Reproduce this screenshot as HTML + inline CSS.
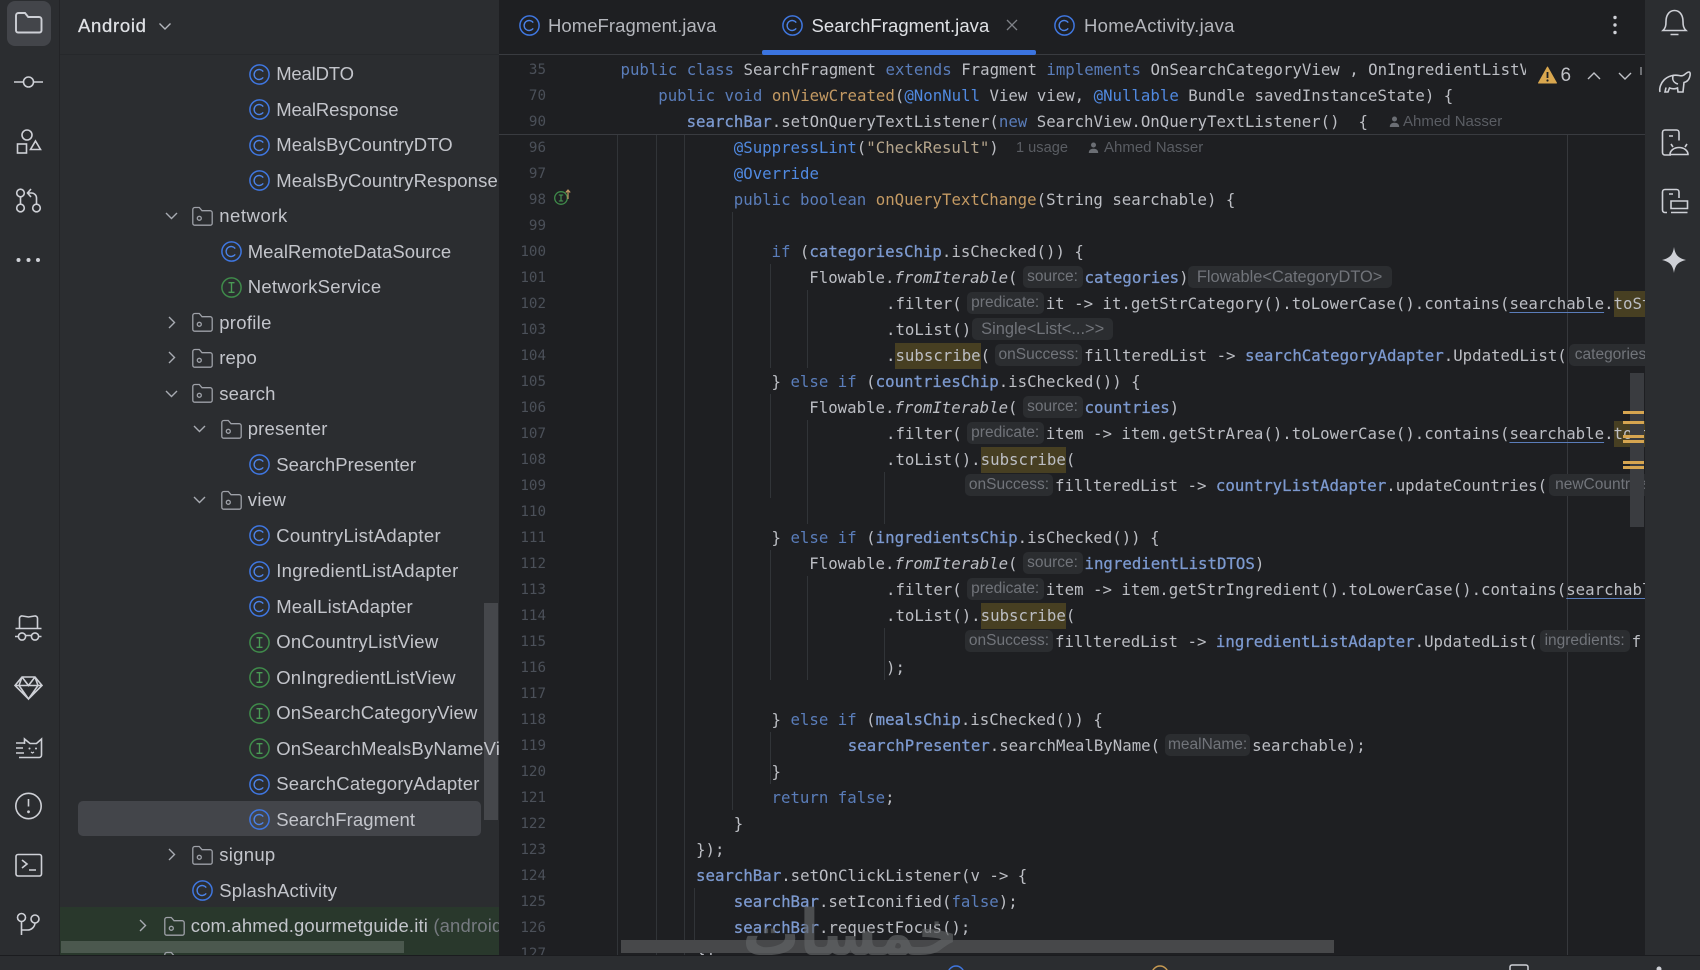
<!DOCTYPE html>
<html><head><meta charset="utf-8"><style>
html,body{margin:0;padding:0;background:#1e1f22;width:1700px;height:970px;overflow:hidden}
#root{position:absolute;left:0;top:0;width:1700px;height:970px;overflow:hidden;background:#1e1f22;font-family:"Liberation Sans",sans-serif}
.abs{position:absolute}
.r{position:absolute;height:26px;line-height:26px;font-size:18.5px;color:#c3c5cb;white-space:nowrap}
.r svg{position:absolute;top:2.5px;left:-27.2px;width:21px;height:21px;overflow:visible}
.r svg.ch{left:-55.6px;top:5px;width:15px;height:15px}
.l{position:absolute;height:26px;line-height:26px;font-family:"DejaVu Sans Mono","Liberation Mono",monospace;font-size:15.72px;color:#bcbec4;white-space:pre}
.n{position:absolute;left:500px;width:46px;margin-top:1px;text-align:right;height:26px;line-height:26px;font-family:"DejaVu Sans Mono","Liberation Mono",monospace;font-size:14.2px;color:#4b5059}
.k{color:#5a7dba}.f{color:#7c99cf;-webkit-text-stroke:.3px #7c99cf}.m{color:#c49a63}.a{color:#5089e0}.s{color:#b5a58c}
.it{font-style:italic}.u{text-decoration:underline;text-decoration-color:#5a7dba;text-underline-offset:3px}
.hl{background:#473f22;display:inline-block;height:26px;vertical-align:top}
.h{display:inline-block;height:22px;line-height:22px;vertical-align:top;margin:1px 2px 0 5px;background:#2b2d30;border-radius:5px;font-family:"Liberation Sans",sans-serif;font-size:15.5px;color:#71747a;text-align:center;overflow:hidden}
.h.b{font-size:16.4px}
.h.cl{text-align:left;text-indent:6px;border-radius:5px 0 0 5px}
.au{position:absolute;font-size:15px;color:#5a5d63;height:26px;line-height:26px;white-space:nowrap}
.gd{position:absolute;width:1px;background:#313438}
.t{position:absolute;top:13px;height:26px;line-height:26px;font-size:18.5px;white-space:nowrap}
</style></head><body><div id="root">

<svg width="0" height="0" style="position:absolute"><defs>
<symbol id="c" viewBox="0 0 21 21"><circle cx="10.5" cy="10.5" r="9.6" fill="none" stroke="#3f76df" stroke-width="1.5"/><path d="M14.2 7.6a5 5 0 1 0 0 5.8" fill="none" stroke="#4b82e6" stroke-width="1.4"/></symbol>
<symbol id="i" viewBox="0 0 21 21"><circle cx="10.5" cy="10.5" r="9.6" fill="none" stroke="#3f8a4a" stroke-width="1.5"/><path d="M7.5 5.7h6M7.5 15.3h6M10.5 5.7v9.6" fill="none" stroke="#4a9a55" stroke-width="1.4"/></symbol>
<symbol id="d" viewBox="0 0 21 21"><path d="M.8 3.5a2 2 0 0 1 2-2h4.5l2.7 3.2h8.2a2 2 0 0 1 2 2v10.5a2 2 0 0 1-2 2H2.8a2 2 0 0 1-2-2z" fill="none" stroke="#9ea1a8" stroke-width="1.3"/><circle cx="7.3" cy="12.3" r="2" fill="none" stroke="#9ea1a8" stroke-width="1.3"/></symbol>
<symbol id="dn" viewBox="0 0 15 15"><path d="M2 5l5.5 5.5L13 5" fill="none" stroke="#a8abb2" stroke-width="1.4"/></symbol>
<symbol id="rt" viewBox="0 0 15 15"><path d="M5 2l5.5 5.5L5 13" fill="none" stroke="#a8abb2" stroke-width="1.4"/></symbol>
</defs></svg>

<!-- left strip + panel -->
<div class="abs" style="left:0;top:0;width:499px;height:955px;background:#2b2d30"></div>
<div class="abs" style="left:59px;top:0;width:1px;height:955px;background:#232427"></div>
<div class="abs" style="left:60px;top:54px;width:439px;height:1px;background:#26282b"></div>
<div class="abs" style="left:7px;top:1px;width:44px;height:45px;border-radius:8px;background:#43454a"></div>

<svg class="abs" style="left:0;top:0" width="60" height="955" fill="none" stroke="#ced0d6" stroke-width="1.6">
<path d="M16 15.5a2.5 2.5 0 0 1 2.5-2.5h6.5l3.2 4h10.8a2.5 2.5 0 0 1 2.5 2.5v11a2 2 0 0 1-2 2H18a2 2 0 0 1-2-2z" stroke-width="1.9"/>
<path d="M14 82h9M33 82h10"/><circle cx="28.500" cy="82" r="5"/>
<circle cx="27" cy="135" r="5"/><rect x="17.500" y="144" width="9" height="9"/><path d="M35.500 141l5 8.500H30.500z"/>
<circle cx="20.500" cy="193" r="3.800"/><circle cx="20.500" cy="208" r="3.800"/><circle cx="36.500" cy="208" r="3.800"/><path d="M20.500 197v7M36.500 204v-6a5 5 0 0 0-5-5h-3M31 189l-3.500 4 3.500 4"/>
<g fill="#ced0d6" stroke="none"><circle cx="18.500" cy="260" r="2"/><circle cx="28.500" cy="260" r="2"/><circle cx="38" cy="260" r="2"/></g>
<path d="M19.500 628v-10a2.500 2.500 0 0 1 3-2l6 1 6-1a2.500 2.500 0 0 1 3 2v10M15.500 628.500h26M15 636.500h3.500M38.500 636.500h3M25.500 635.500h6"/><circle cx="22" cy="636.500" r="3.600"/><circle cx="35" cy="636.500" r="3.600"/>
<path d="M15 685.500l7-8.500h13l7 8.500-13.500 13.500zM15 685.500h27M22 677l-3 8.500 9.500 13.500 9.500-13.500-3-8.500M22 677l6.500 8.500L35 677" stroke-width="1.600"/>
<path d="M16 743h8M16 748h7M16 753h8M19 757.500h6M24.500 744v-5l5.500 4.500h6.500l5-4.500v16a2.500 2.500 0 0 1-2.500 2.500H25"/><path d="M31 752l1.500 1 1.500-1" stroke-width="1.300"/><circle cx="29.500" cy="748.500" r="1" fill="#ced0d6" stroke="none"/><circle cx="36" cy="748.500" r="1" fill="#ced0d6" stroke="none"/>
<circle cx="28.500" cy="806" r="12.700"/><path d="M28.500 799v7.500"/><circle cx="28.500" cy="811.800" r="1.400" fill="#ced0d6" stroke="none"/>
<rect x="16" y="854.500" width="25.500" height="21.500" rx="2"/><path d="M22 860l5 4-5 4M29 870h7"/>
<circle cx="21.500" cy="917.500" r="4"/><circle cx="35" cy="919" r="4"/><path d="M21.500 921.500v13.500M21.500 930h6a7.500 7.500 0 0 0 7.500-7"/>
</svg>

<div class="abs" style="left:78px;top:12px;height:26px;line-height:27px;font-size:18.5px;letter-spacing:.7px;color:#dfe1e5;-webkit-text-stroke:.25px #dfe1e5">Android</div>
<svg class="abs" style="left:158px;top:19px" width="14" height="14" viewBox="0 0 14 14" fill="none" stroke="#b4b7bd" stroke-width="1.4"><path d="M1.500 4.500L7 10l5.500-5.500"/></svg>

<!-- panel rows -->
<div class="abs" style="left:60px;top:907px;width:439px;height:48px;background:#29382c"></div>
<div class="abs" style="left:61px;top:941px;width:343px;height:12px;background:#4b584e"></div>
<div class="abs" style="left:77.500px;top:801px;width:403px;height:35px;border-radius:5px;background:#43454a"></div>
<div class="abs" style="left:484px;top:603px;width:14px;height:217px;background:#45474b"></div>

<div class="abs" style="left:60px;top:55px;width:439px;height:900px;overflow:hidden">
<div style="position:absolute;left:-60px;top:-55px;width:499px;height:1010px">
<div class="r" style="left:276.200px;top:61px;letter-spacing:-.17px"><svg><use href="#c"/></svg>MealDTO</div>
<div class="r" style="left:276.200px;top:96.500px;letter-spacing:-.1px"><svg><use href="#c"/></svg>MealResponse</div>
<div class="r" style="left:276.200px;top:132px;letter-spacing:.13px"><svg><use href="#c"/></svg>MealsByCountryDTO</div>
<div class="r" style="left:276.200px;top:167.500px;letter-spacing:.12px"><svg><use href="#c"/></svg>MealsByCountryResponse</div>
<div class="r" style="left:219.200px;top:203px;letter-spacing:.55px"><svg class="ch"><use href="#dn"/></svg><svg><use href="#d"/></svg>network</div>
<div class="r" style="left:247.700px;top:238.500px;letter-spacing:.05px"><svg><use href="#c"/></svg>MealRemoteDataSource</div>
<div class="r" style="left:247.700px;top:274px;letter-spacing:.3px"><svg><use href="#i"/></svg>NetworkService</div>
<div class="r" style="left:219.200px;top:309.500px;letter-spacing:.3px"><svg class="ch"><use href="#rt"/></svg><svg><use href="#d"/></svg>profile</div>
<div class="r" style="left:219.200px;top:345px;letter-spacing:.2px"><svg class="ch"><use href="#rt"/></svg><svg><use href="#d"/></svg>repo</div>
<div class="r" style="left:219.200px;top:380.500px;letter-spacing:.15px"><svg class="ch"><use href="#dn"/></svg><svg><use href="#d"/></svg>search</div>
<div class="r" style="left:247.700px;top:416px;letter-spacing:.2px"><svg class="ch"><use href="#dn"/></svg><svg><use href="#d"/></svg>presenter</div>
<div class="r" style="left:276.200px;top:451.500px;letter-spacing:.07px"><svg><use href="#c"/></svg>SearchPresenter</div>
<div class="r" style="left:247.700px;top:487px;letter-spacing:.4px"><svg class="ch"><use href="#dn"/></svg><svg><use href="#d"/></svg>view</div>
<div class="r" style="left:276.200px;top:522.500px;letter-spacing:.36px"><svg><use href="#c"/></svg>CountryListAdapter</div>
<div class="r" style="left:276.200px;top:558px;letter-spacing:.31px"><svg><use href="#c"/></svg>IngredientListAdapter</div>
<div class="r" style="left:276.200px;top:593.500px;letter-spacing:.2px"><svg><use href="#c"/></svg>MealListAdapter</div>
<div class="r" style="left:276.200px;top:629px;letter-spacing:.25px"><svg><use href="#i"/></svg>OnCountryListView</div>
<div class="r" style="left:276.200px;top:664.500px;letter-spacing:.2px"><svg><use href="#i"/></svg>OnIngredientListView</div>
<div class="r" style="left:276.200px;top:700px;letter-spacing:.16px"><svg><use href="#i"/></svg>OnSearchCategoryView</div>
<div class="r" style="left:276.200px;top:735.500px;letter-spacing:.2px"><svg><use href="#i"/></svg>OnSearchMealsByNameView</div>
<div class="r" style="left:276.200px;top:771px;letter-spacing:.24px"><svg><use href="#c"/></svg>SearchCategoryAdapter</div>
<div class="r" style="left:276.200px;top:806.500px;letter-spacing:.08px"><svg><use href="#c"/></svg>SearchFragment</div>
<div class="r" style="left:219.200px;top:842px;letter-spacing:.3px"><svg class="ch"><use href="#rt"/></svg><svg><use href="#d"/></svg>signup</div>
<div class="r" style="left:219.200px;top:877.500px;letter-spacing:.2px"><svg><use href="#c"/></svg>SplashActivity</div>
<div class="r" style="left:190.700px;top:913px;letter-spacing:.15px"><svg class="ch"><use href="#rt"/></svg><svg><use href="#d"/></svg>com.ahmed.gourmetguide.iti <span style="color:#767a80">(androidTest)</span></div>
<div class="r" style="left:190.700px;top:948.500px"><svg><use href="#d"/></svg></div>
</div></div>

<!-- tabs -->
<div class="abs" style="left:499px;top:54px;width:1146px;height:1px;background:#393b40"></div>
<svg class="abs" style="left:519px;top:15px" width="21" height="21"><use href="#c"/></svg>
<div class="t" style="left:548px;color:#b4b6bc;letter-spacing:.05px">HomeFragment.java</div>
<svg class="abs" style="left:782px;top:15px" width="21" height="21"><use href="#c"/></svg>
<div class="t" style="left:811.500px;color:#dfe1e5;letter-spacing:.05px">SearchFragment.java</div>
<svg class="abs" style="left:1006px;top:19px" width="12" height="12" fill="none" stroke="#7f8288" stroke-width="1.3"><path d="M1 1l10 10M11 1L1 11"/></svg>
<svg class="abs" style="left:1054px;top:15px" width="21" height="21"><use href="#c"/></svg>
<div class="t" style="left:1084px;color:#b4b6bc;letter-spacing:.3px">HomeActivity.java</div>
<div class="abs" style="left:762px;top:50px;width:274px;height:5px;border-radius:2px;background:#3b74e0"></div>
<svg class="abs" style="left:1611px;top:15px" width="8" height="20" fill="#ced0d6"><circle cx="4" cy="2.500" r="1.700"/><circle cx="4" cy="10" r="1.700"/><circle cx="4" cy="17.500" r="1.700"/></svg>

<!-- editor guides -->
<div class="gd" style="left:617px;top:134px;height:821px"></div>
<div class="gd" style="left:656px;top:134px;height:821px"></div>
<div class="gd" style="left:684px;top:134px;height:821px"></div>
<div class="gd" style="left:732px;top:212px;height:598px"></div>
<div class="gd" style="left:770px;top:264px;height:104px"></div>
<div class="gd" style="left:807px;top:290px;height:78px"></div>
<div class="gd" style="left:770px;top:394px;height:104px"></div>
<div class="gd" style="left:807px;top:420px;height:104px"></div>
<div class="gd" style="left:884px;top:472px;height:52px"></div>
<div class="gd" style="left:770px;top:550px;height:130px"></div>
<div class="gd" style="left:807px;top:576px;height:104px"></div>
<div class="gd" style="left:884px;top:628px;height:52px"></div>
<div class="gd" style="left:770px;top:732px;height:52px"></div>
<div class="gd" style="left:694px;top:888px;height:58px"></div>
<div class="gd" style="left:1567px;top:134px;height:821px;background:#36383c"></div>

<!-- line numbers -->
<div class="n" style="top:56px">35</div><div class="n" style="top:82px">70</div><div class="n" style="top:108px">90</div>
<div class="n" style="top:134px">96</div><div class="n" style="top:160px">97</div><div class="n" style="top:186px">98</div><div class="n" style="top:212px">99</div>
<div class="n" style="top:238px">100</div><div class="n" style="top:264px">101</div><div class="n" style="top:290px">102</div><div class="n" style="top:316px">103</div><div class="n" style="top:342px">104</div><div class="n" style="top:368px">105</div><div class="n" style="top:394px">106</div><div class="n" style="top:420px">107</div><div class="n" style="top:446px">108</div><div class="n" style="top:472px">109</div><div class="n" style="top:498px">110</div><div class="n" style="top:524px">111</div><div class="n" style="top:550px">112</div><div class="n" style="top:576px">113</div><div class="n" style="top:602px">114</div><div class="n" style="top:628px">115</div><div class="n" style="top:654px">116</div><div class="n" style="top:680px">117</div><div class="n" style="top:706px">118</div><div class="n" style="top:732px">119</div><div class="n" style="top:758px">120</div><div class="n" style="top:784px">121</div><div class="n" style="top:810px">122</div><div class="n" style="top:836px">123</div><div class="n" style="top:862px">124</div><div class="n" style="top:888px">125</div><div class="n" style="top:914px">126</div><div class="n" style="top:940px;height:14px;overflow:hidden">127</div>

<svg class="abs" style="left:553px;top:188px" width="20" height="20" fill="none"><circle cx="8" cy="10" r="6.300" stroke="#3f8a4a" stroke-width="1.300"/><path d="M5.800 7h4.400M5.800 13h4.400M8 7v6" stroke="#4a9a55" stroke-width="1.100"/><path d="M15 11V2M12.800 4.500L15 2l2.200 2.500" stroke="#c49a63" stroke-width="1.200"/></svg>

<!-- code -->
<div class="abs" style="left:1px;top:1px;width:1644px;height:954px;overflow:hidden">
<div class="abs" style="left:619.500px;top:56px;width:905px;height:26px;overflow:hidden"><div class="l" style="left:0;top:0"><span class="k">public class</span> SearchFragment <span class="k">extends</span> Fragment <span class="k">implements</span> OnSearchCategoryView , OnIngredientListView</div></div>
<div class="l" style="left:657.260px;top:82px"><span class="k">public void</span> <span class="m">onViewCreated</span>(<span class="a">@NonNull</span> View view, <span class="a">@Nullable</span> Bundle savedInstanceState) {</div>
<div class="l" style="left:685.580px;top:108px"><span class="f">searchBar</span>.setOnQueryTextListener(<span class="k">new</span> SearchView.OnQueryTextListener()  {</div>
<div class="au" style="left:1402px;top:108px">Ahmed Nasser</div>
<svg class="abs" style="left:1388px;top:115px" width="11" height="12" fill="#6b6e74"><circle cx="5.500" cy="3" r="2.500"/><path d="M.8 11c0-3 2-4.200 4.700-4.200S10.200 8 10.200 11z"/></svg>
<div class="abs" style="left:498px;top:133px;width:1146px;height:1px;background:#393b40"></div>

<div class="l" style="left:732.780px;top:134px"><span class="a">@SuppressLint</span>(<span class="s">"CheckResult"</span>)</div>
<div class="au" style="left:1015px;top:134px;font-size:14.600px">1 usage</div>
<svg class="abs" style="left:1087px;top:141px" width="11" height="12" fill="#6b6e74"><circle cx="5.500" cy="3" r="2.500"/><path d="M.8 11c0-3 2-4.200 4.700-4.200S10.200 8 10.200 11z"/></svg>
<div class="au" style="left:1103px;top:134px">Ahmed Nasser</div>
<div class="l" style="left:732.780px;top:160px"><span class="a">@Override</span></div>
<div class="l" style="left:732.780px;top:186px"><span class="k">public boolean</span> <span class="m">onQueryTextChange</span>(String searchable) {</div>

<div class="l" style="left:770.540px;top:238px"><span class="k">if</span> (<span class="f">categoriesChip</span>.isChecked()) {</div>
<div class="l" style="left:808.300px;top:264px">Flowable.<span class="it">fromIterable</span>(<span class="h" style="width:60px">source:</span><span class="f">categories</span>)<span class="h b" style="width:204px;margin-left:-1px">Flowable&lt;CategoryDTO&gt;</span></div>
<div class="l" style="left:885px;top:290px">.filter(<span class="h" style="width:77px">predicate:</span>it -&gt; it.getStrCategory().toLowerCase().contains(<span class="u">searchable</span>.<span class="hl">toString</span></div>
<div class="l" style="left:885px;top:316px">.toList()<span class="h b" style="width:141px;margin-left:1px">Single&lt;List&lt;...&gt;&gt;</span></div>
<div class="l" style="left:885px;top:342px">.<span class="hl">subscribe</span>(<span class="h" style="width:87px">onSuccess:</span>fillteredList -&gt; <span class="f">searchCategoryAdapter</span>.UpdatedList(<span class="h cl" style="width:100px;margin-left:2px">categories:</span></div>
<div class="l" style="left:770.540px;top:368px">} <span class="k">else if</span> (<span class="f">countriesChip</span>.isChecked()) {</div>
<div class="l" style="left:808.300px;top:394px">Flowable.<span class="it">fromIterable</span>(<span class="h" style="width:60px">source:</span><span class="f">countries</span>)</div>
<div class="l" style="left:885px;top:420px">.filter(<span class="h" style="width:77px">predicate:</span>item -&gt; item.getStrArea().toLowerCase().contains(<span class="u">searchable</span>.<span class="hl">toString</span></div>
<div class="l" style="left:885px;top:446px">.toList().<span class="hl">subscribe</span>(</div>
<div class="l" style="left:959px;top:472px"><span class="h" style="width:88px">onSuccess:</span>fillteredList -&gt; <span class="f">countryListAdapter</span>.updateCountries(<span class="h cl" style="width:110px;margin-left:2px">newCountries:</span></div>
<div class="l" style="left:770.540px;top:524px">} <span class="k">else if</span> (<span class="f">ingredientsChip</span>.isChecked()) {</div>
<div class="l" style="left:808.300px;top:550px">Flowable.<span class="it">fromIterable</span>(<span class="h" style="width:60px">source:</span><span class="f">ingredientListDTOS</span>)</div>
<div class="l" style="left:885px;top:576px">.filter(<span class="h" style="width:77px">predicate:</span>item -&gt; item.getStrIngredient().toLowerCase().contains(<span class="u">searchable</span></div>
<div class="l" style="left:885px;top:602px">.toList().<span class="hl">subscribe</span>(</div>
<div class="l" style="left:959px;top:628px"><span class="h" style="width:88px">onSuccess:</span>fillteredList -&gt; <span class="f">ingredientListAdapter</span>.UpdatedList(<span class="h" style="width:90px;margin-left:2px">ingredients:</span>f</div>
<div class="l" style="left:885px;top:654px">);</div>
<div class="l" style="left:770.540px;top:706px">} <span class="k">else if</span> (<span class="f">mealsChip</span>.isChecked()) {</div>
<div class="l" style="left:846.800px;top:732px"><span class="f">searchPresenter</span>.searchMealByName(<span class="h" style="width:85px">mealName:</span>searchable);</div>
<div class="l" style="left:770.540px;top:758px">}</div>
<div class="l" style="left:770.540px;top:784px"><span class="k">return false</span>;</div>
<div class="l" style="left:732.780px;top:810px">}</div>
<div class="l" style="left:695.020px;top:836px">});</div>
<div class="l" style="left:695.020px;top:862px"><span class="f">searchBar</span>.setOnClickListener(v -&gt; {</div>
<div class="l" style="left:732.780px;top:888px"><span class="f">searchBar</span>.setIconified(<span class="k">false</span>);</div>
<div class="l" style="left:732.780px;top:914px"><span class="f">searchBar</span>.requestFocus();</div>
<div class="l" style="left:695.020px;top:940px">});</div>
</div>

<!-- inspections -->
<svg class="abs" style="left:1538px;top:66px" width="19" height="18"><path d="M9.500 1L18.500 17H.5z" fill="#d9a74f" stroke="#d9a74f" stroke-linejoin="round" stroke-width="1"/><path d="M9.500 6v6" stroke="#1e1f22" stroke-width="1.800"/><circle cx="9.500" cy="14.500" r="1.100" fill="#1e1f22"/></svg>
<div class="abs" style="left:1560.500px;top:63px;font-size:19px;line-height:26px;color:#bfc1c7">6</div>
<svg class="abs" style="left:1587px;top:71px" width="45" height="10" fill="none" stroke="#c0c2c8" stroke-width="1.400"><path d="M1 8l6-6 6 6M32 2l6 6 6-6"/></svg>
<div class="abs" style="left:1640px;top:67px;width:1.500px;height:8px;background:#6e7074"></div>

<!-- right scroll -->
<div class="abs" style="left:1630px;top:373px;width:14px;height:154px;background:#3a3c40"></div>
<div class="abs" style="left:1623px;top:411px;width:21px;height:3px;background:#d6a550"></div>
<div class="abs" style="left:1623px;top:421px;width:21px;height:3px;background:#d6a550"></div>
<div class="abs" style="left:1623px;top:435px;width:21px;height:3px;background:#d6a550"></div>
<div class="abs" style="left:1623px;top:440px;width:21px;height:3px;background:#d6a550"></div>
<div class="abs" style="left:1623px;top:461px;width:21px;height:3px;background:#d6a550"></div>
<div class="abs" style="left:1623px;top:466px;width:21px;height:3px;background:#d6a550"></div>

<!-- right strip -->
<div class="abs" style="left:1645px;top:0;width:55px;height:955px;background:#2b2d30"></div>
<svg class="abs" style="left:1645px;top:0" width="55" height="290" fill="none" stroke="#ced0d6" stroke-width="1.600">
<path d="M18 30.500c2.500-2.500 3-5 3-9 0-6 3-11 8.500-11s8.500 5 8.500 11c0 4 .5 6.500 3 9zM25.500 34.500h8"/>
<path d="M15 92c-1-4 1-9 4-12 4-4 10-5.500 15-4.500 2 .5 3.500.5 5-.5s3-3 5-3c1.500 0 1.500 3 .5 5.500-1 3-3.500 4.500-5.500 5l-1 9.500h-5l-.5-4c-2 1-5 1-8 0l-1.500 4H20l1-4.500M28 76c-1 4 1 7 5 8"/>
<path d="M26 155h-6a2.500 2.500 0 0 1-2.500-2.500v-20a2.500 2.500 0 0 1 2.500-2.500h11.500a2.500 2.500 0 0 1 2.500 2.500v8M24 136h4M25 154.500a9 7 0 0 1 18 0zM28 147l-2-3M40 147l2-3"/>
<path d="M22 212.500h-2a2.500 2.500 0 0 1-2.500-2.500v-18a2.500 2.500 0 0 1 2.500-2.500h11.500a2.500 2.500 0 0 1 2.500 2.500v6M24 194h4M26 201h16.500v7.500H26zM26 212.500h16.500"/>
<path d="M29 247c1.200 8 4 11 12 13-8 2-10.800 5-12 13-1.200-8-4-11-12-13 8-2 10.800-5 12-13z" fill="#ced0d6" stroke="none"/>
</svg>

<!-- horizontal scroll + watermark -->
<div class="abs" style="left:621px;top:940px;width:713px;height:13px;background:#47484a"></div>
<div class="abs" dir="rtl" style="left:691px;top:889px;width:320px;height:90px;line-height:90px;text-align:center;font-family:'DejaVu Sans',sans-serif;font-weight:700;font-size:85px;color:#606264;opacity:.7;white-space:nowrap;transform:scale(.67,.75)">خمسات</div>

<!-- status bar -->
<div class="abs" style="left:0;top:955px;width:1700px;height:15px;background:#2b2d30;border-top:1px solid #1b1c1f;box-sizing:border-box"></div>
<svg class="abs" style="left:0;top:955px" width="1700" height="15" fill="none" stroke-width="1.500">
<circle cx="956" cy="19" r="8" stroke="#3f76df"/>
<circle cx="1160" cy="19" r="8" stroke="#c79a52"/>
<path d="M1510 15v-3a2 2 0 0 1 2-2h14a2 2 0 0 1 2 2v3" stroke="#ced0d6"/>
<circle cx="1659" cy="14" r="2.500" fill="#ced0d6" stroke="none"/>
</svg>
</div></body></html>
